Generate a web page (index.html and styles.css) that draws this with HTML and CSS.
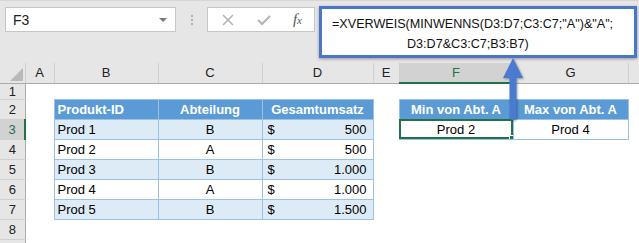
FILE: index.html
```html
<!DOCTYPE html>
<html lang="de">
<head>
  <meta charset="UTF-8">
  <title>XVERWEIS MINWENNS</title>
  <link rel="stylesheet" href="styles.css">
</head>
<body>
  <div class="toolbar">
    <div class="name-box">
      <span>F3</span>
      <span class="drop"></span>
    </div>
    <div class="dots"><i></i><i></i><i></i></div>
    <div class="fx-buttons">
      <svg width="14" height="14" viewBox="0 0 14 14"><path d="M2 2 L12 12 M12 2 L2 12" stroke="#b4b4b4" stroke-width="1.6" fill="none"/></svg>
      <svg width="16" height="14" viewBox="0 0 16 14"><path d="M2 7 L6 11 L14 3" stroke="#b4b4b4" stroke-width="2" fill="none"/></svg>
      <span class="fx">f<small>x</small></span>
    </div>
    <div class="formula">
      <div>=XVERWEIS(MINWENNS(D3:D7;C3:C7;"A")&amp;"A";</div>
      <div class="indent">D3:D7&amp;C3:C7;B3:B7)</div>
    </div>
  </div>

  <div class="sheet">
    <table class="grid">
      <colgroup>
        <col style="width:25px"><col style="width:29px"><col style="width:104px"><col style="width:104px">
        <col style="width:111px"><col style="width:26px"><col style="width:114px"><col style="width:115px"><col style="width:11px">
      </colgroup>
      <tr class="col-head">
        <th class="corner"></th><th>A</th><th>B</th><th>C</th><th>D</th><th>E</th><th class="sel">F</th><th>G</th><th></th>
      </tr>
      <tr class="r1">
        <th class="row-head">1</th><td></td><td></td><td></td><td></td><td></td><td></td><td></td><td></td>
      </tr>
      <tr>
        <th class="row-head">2</th><td></td>
        <td class="hd left">Produkt-ID</td><td class="hd">Abteilung</td><td class="hd">Gesamtumsatz</td>
        <td></td>
        <td class="hd">Min von Abt. A</td><td class="hd">Max von Abt. A</td><td></td>
      </tr>
      <tr>
        <th class="row-head sel">3</th><td></td>
        <td class="t band">Prod 1</td><td class="t band c">B</td><td class="t band"><span class="usd">$</span><span class="num">500</span></td>
        <td></td>
        <td class="t c active">Prod 2</td><td class="t c">Prod 4</td><td></td>
      </tr>
      <tr>
        <th class="row-head">4</th><td></td>
        <td class="t">Prod 2</td><td class="t c">A</td><td class="t"><span class="usd">$</span><span class="num">500</span></td>
        <td></td><td></td><td></td><td></td>
      </tr>
      <tr>
        <th class="row-head">5</th><td></td>
        <td class="t band">Prod 3</td><td class="t band c">B</td><td class="t band"><span class="usd">$</span><span class="num">1.000</span></td>
        <td></td><td></td><td></td><td></td>
      </tr>
      <tr>
        <th class="row-head">6</th><td></td>
        <td class="t">Prod 4</td><td class="t c">A</td><td class="t"><span class="usd">$</span><span class="num">1.000</span></td>
        <td></td><td></td><td></td><td></td>
      </tr>
      <tr>
        <th class="row-head">7</th><td></td>
        <td class="t band">Prod 5</td><td class="t band c">B</td><td class="t band"><span class="usd">$</span><span class="num">1.500</span></td>
        <td></td><td></td><td></td><td></td>
      </tr>
      <tr>
        <th class="row-head">8</th><td></td><td></td><td></td><td></td><td></td><td></td><td></td><td></td>
      </tr>
      <tr class="r9">
        <th class="row-head"></th><td></td><td></td><td></td><td></td><td></td><td></td><td></td><td></td>
      </tr>
    </table>

    <svg class="arrow" width="28" height="66" viewBox="0 0 28 66">
      <path d="M14 2 L24 22 L17.5 22 L17.5 61 Q17.5 64 14 64 Q10.5 64 10.5 61 L10.5 22 L4 22 Z" fill="#4a7bd0"/>
    </svg>
  </div>
</body>
</html>
```

FILE: styles.css
```css
body {
  margin: 0;
  background: #fff;
  font-family: "Liberation Sans", Arial, sans-serif;
  overflow: hidden;
}
.toolbar {
  display: flex;
  align-items: flex-start;
  height: 63px;
  background: #e6e6e6;
  border-top: 1px solid #d6d6d6;
  box-sizing: border-box;
  padding: 6px 2px 0 5px;
  position: relative;
  z-index: 2;
}
.name-box {
  width: 171px;
  height: 25px;
  box-sizing: border-box;
  background: #fff;
  border: 1px solid #c6c6c6;
  display: flex;
  align-items: center;
  justify-content: space-between;
  padding: 0 8px 0 7px;
  font-size: 14px;
  color: #222;
}
.drop {
  width: 0;
  height: 0;
  border-left: 4px solid transparent;
  border-right: 4px solid transparent;
  border-top: 4px solid #777;
}
.dots {
  width: 31px;
  display: flex;
  flex-direction: column;
  align-items: center;
  gap: 2px;
  padding-top: 8px;
}
.dots i {
  width: 2px;
  height: 2px;
  background: #b0b0b0;
}
.fx-buttons {
  width: 108px;
  height: 25px;
  box-sizing: border-box;
  background: #fff;
  border: 1px solid #c6c6c6;
  display: flex;
  align-items: center;
  justify-content: space-between;
  padding: 0 12px 0 13px;
}
.fx {
  font-family: "Liberation Serif", serif;
  font-style: italic;
  font-size: 15px;
  color: #555;
}
.fx small {
  font-size: 11px;
}
.formula {
  margin-left: 4px;
  margin-top: -1px;
  width: 318px;
  height: 52px;
  box-sizing: border-box;
  background: #fff;
  border: 3px solid #4a76c8;
  box-shadow: 0 1px 3px rgba(0, 0, 0, 0.35);
  padding: 5px 0 0 10px;
  font-size: 12.6px;
  line-height: 20px;
  color: #111;
  white-space: nowrap;
}
.formula .indent {
  padding-left: 75px;
}
.sheet {
  position: relative;
}
.grid {
  border-collapse: collapse;
  table-layout: fixed;
  width: 639px;
  font-size: 13px;
  color: #000;
}
.grid td, .grid th {
  padding: 0 3px;
  height: 20px;
  box-sizing: border-box;
  overflow: hidden;
  white-space: nowrap;
}
.col-head th {
  background: #e6e6e6;
  font-weight: normal;
  color: #222;
  border-left: 1px solid #d0d0d0;
  border-bottom: 1px solid #ababab;
  text-align: center;
}
.col-head th.corner {
  border-left: none;
  position: relative;
}
.corner::after {
  content: "";
  position: absolute;
  right: 2px;
  bottom: 2px;
  border-left: 13px solid transparent;
  border-bottom: 13px solid #b9b9b9;
}
.col-head th.sel {
  background: #d2d2d2;
  color: #217346;
  border-bottom: 2px solid #217346;
}
.grid tr.r1 td, .grid tr.r1 th {
  height: 14px;
}
.grid tr.r9 td, .grid tr.r9 th {
  height: 6px;
}
.row-head {
  background: #e6e6e6;
  font-weight: normal;
  color: #222;
  text-align: center;
  border-bottom: 1px solid #d0d0d0;
  border-right: 1px solid #ababab;
}
.row-head.sel {
  background: #d2d2d2;
  color: #217346;
  border-right: 2px solid #217346;
}
.hd {
  background: #5b9bd5;
  color: #fff;
  font-weight: bold;
  text-align: center;
  border: 1px solid #9bc2e6;
}
.hd.left {
  text-align: left;
}
.t {
  border: 1px solid #9bc2e6;
}
.t.band {
  background: #ddebf7;
}
.t.c {
  text-align: center;
}
.usd {
  float: left;
  padding-left: 2px;
}
.num {
  float: right;
  padding-right: 3px;
}
.t.active {
  outline: 2px solid #217346;
  outline-offset: -2px;
  position: relative;
}
.t.active::after {
  content: "";
  position: absolute;
  right: -3px;
  bottom: -3px;
  width: 5px;
  height: 5px;
  background: #217346;
  border: 1px solid #fff;
}
.arrow {
  position: absolute;
  left: 499px;
  top: -7px;
  filter: drop-shadow(1px 1px 1px rgba(0, 0, 0, 0.35));
  z-index: 3;
}
```
